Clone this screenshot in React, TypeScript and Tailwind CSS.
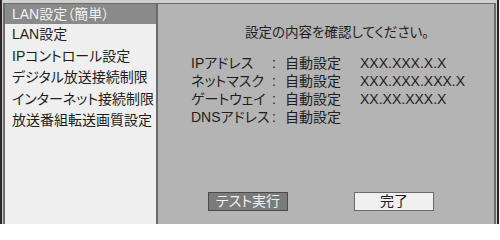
const menu = [
  "LAN設定",
  "IPコントロール設定",
  "デジタル放送接続制限",
  "インターネット接続制限",
  "放送番組転送画質設定",
];

const rows = [
  { label: "IPアドレス", value: "XXX.XXX.X.X" },
  { label: "ネットマスク", value: "XXX.XXX.XXX.X" },
  { label: "ゲートウェイ", value: "XX.XX.XXX.X" },
  { label: "DNSアドレス", value: "" },
];

export default function App() {
  return (
    <div
      className="w-[500px] h-[224px] flex bg-[#f4f4f4] text-[#1e1e1e] overflow-hidden [font-feature-settings:'palt']"
      style={{ fontFamily: '"Liberation Sans", "Noto Sans CJK JP", sans-serif' }}
    >
      <div className="flex-1 flex border-x-2 border-[#2b2424] bg-[#cfcfcf] pt-[3px] px-px">
        <div className="flex-1 flex border-t border-l-2 border-r-2 border-[#6b6b6b]">
          {/* left menu */}
          <div className="w-[153px] shrink-0 bg-[#efefef] border-r-2 border-[#6b6b6b] text-[14px]">
            <div className="h-[20px] leading-[20px] bg-[#8a8a8a] text-[#f2f2f2] pl-[7px] whitespace-nowrap">
              LAN設定（簡単）
            </div>
            {menu.map((item) => (
              <div key={item} className="h-[21.5px] leading-[21.5px] pl-[7px] whitespace-nowrap">
                {item}
              </div>
            ))}
          </div>

          {/* right content */}
          <div className="flex-1 bg-[#b4b4b4] flex flex-col">
            <div className="pt-[20px] pl-[87px] text-[13.5px] leading-[18px] whitespace-nowrap">
              設定の内容を確認してください。
            </div>
            <div className="mt-[12px] pl-[33px] text-[14px]">
              {rows.map((r) => (
                <div key={r.label} className="flex h-[18px] leading-[18px] whitespace-nowrap">
                  <span className="w-[81px]">{r.label}</span>
                  <span className="w-[13px]">:</span>
                  <span className="w-[75px]">自動設定</span>
                  <span>{r.value}</span>
                </div>
              ))}
            </div>
            <div className="mt-[66px] pl-[50px] flex gap-[66px] text-[14px]">
              <div className="w-[80px] h-[19px] leading-[17px] text-center bg-[#7b7b7b] border border-[#4a4a4a] text-[#f0f0f0]">
                テスト実行
              </div>
              <div className="w-[80px] h-[19px] leading-[17px] text-center bg-[#f0f0f0] border border-[#6a6a6a]">
                完了
              </div>
            </div>
          </div>
        </div>
      </div>
      <div className="w-px" />
    </div>
  );
}
